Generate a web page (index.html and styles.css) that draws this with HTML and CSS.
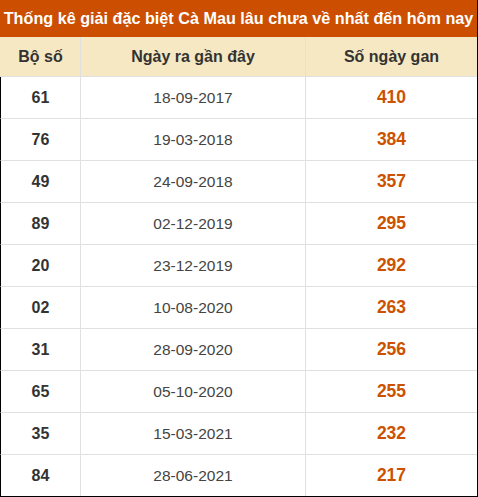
FILE: index.html
```html
<!DOCTYPE html>
<html lang="vi">
<head>
<meta charset="utf-8">
<link rel="stylesheet" href="styles.css">
</head>
<body>
<div class="box">
  <div class="title">Thống kê giải đặc biệt Cà Mau lâu chưa về nhất đến hôm nay</div>
  <div class="grid">
    <div class="row head"><div class="c">Bộ số</div><div class="c">Ngày ra gần đây</div><div class="c">Số ngày gan</div></div>
    <div class="row"><div class="c num">61</div><div class="c date">18-09-2017</div><div class="c gan">410</div></div>
    <div class="row"><div class="c num">76</div><div class="c date">19-03-2018</div><div class="c gan">384</div></div>
    <div class="row"><div class="c num">49</div><div class="c date">24-09-2018</div><div class="c gan">357</div></div>
    <div class="row"><div class="c num">89</div><div class="c date">02-12-2019</div><div class="c gan">295</div></div>
    <div class="row"><div class="c num">20</div><div class="c date">23-12-2019</div><div class="c gan">292</div></div>
    <div class="row"><div class="c num">02</div><div class="c date">10-08-2020</div><div class="c gan">263</div></div>
    <div class="row"><div class="c num">31</div><div class="c date">28-09-2020</div><div class="c gan">256</div></div>
    <div class="row"><div class="c num">65</div><div class="c date">05-10-2020</div><div class="c gan">255</div></div>
    <div class="row"><div class="c num">35</div><div class="c date">15-03-2021</div><div class="c gan">232</div></div>
    <div class="row"><div class="c num">84</div><div class="c date">28-06-2021</div><div class="c gan">217</div></div>
  </div>
</div>
</body>
</html>
```
FILE: styles.css
```css
html, body { margin: 0; padding: 0; background: #fff; }
body { font-family: "Liberation Sans", Arial, sans-serif; color: #333; }
.box { width: 477px; height: 496px; border-right: 1px solid #000; border-bottom: 1px solid #000; }
.title {
  height: 37px; background: #cc4e00; color: #fff; font-weight: bold; font-size: 16.2px;
  display: flex; align-items: center; justify-content: center; white-space: nowrap;
}
.grid { display: flex; flex-direction: column; }
.row {
  display: grid; grid-template-columns: 79px 225px 1fr;
  height: 41px; border-bottom: 1px solid #e0e0e0; border-left: 1px solid #000;
  box-sizing: content-box;
}
.row:last-child { border-bottom: none; }
.head { height: 39px; background: #f6e8c2; border-left: none; padding-left: 1px; }
.c { display: flex; align-items: center; justify-content: center; }
.c + .c { border-left: 1px solid #e0e0e0; }
.head .c { font-weight: bold; font-size: 16px; color: #333; }
.num { font-weight: bold; font-size: 16px; }
.date { font-size: 15.5px; color: #444; }
.gan { font-weight: bold; font-size: 17.5px; color: #cc5200; }
```
